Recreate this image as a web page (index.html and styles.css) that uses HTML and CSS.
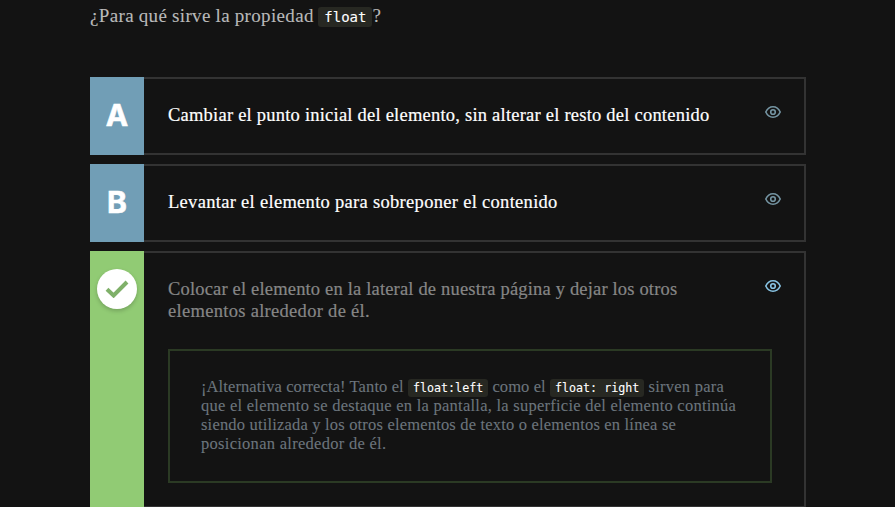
FILE: index.html
```html
<!DOCTYPE html>
<html lang="es">
<head>
<meta charset="utf-8">
<title>Propiedad float</title>
<link rel="stylesheet" href="styles.css">
</head>
<body>
<svg class="symbols" aria-hidden="true">
  <symbol id="eye" viewBox="0 0 18 14">
    <path d="M1.800 7C3.200 3.900 5.700 1.800 9 1.800S14.800 3.900 16.200 7C14.800 10.100 12.300 12.200 9 12.200S3.200 10.100 1.800 7Z" fill="none" stroke="currentColor" stroke-width="1.6"/>
    <circle cx="9" cy="7" r="2.3" fill="none" stroke="currentColor" stroke-width="1.6"/>
  </symbol>
</svg>
<main class="quiz">
  <p class="question"><span class="q1">¿Para qué sirve la propiedad</span> <code>float</code>?</p>
  <ol class="options">
    <li class="option">
      <div class="letter">A</div>
      <div class="body"><p class="answer"><span class="a1">Cambiar el punto inicial del elemento, sin alterar el resto del contenido</span></p></div>
      <svg class="eye"><use href="#eye"/></svg>
    </li>
    <li class="option">
      <div class="letter">B</div>
      <div class="body"><p class="answer"><span class="a2">Levantar el elemento para sobreponer el contenido</span></p></div>
      <svg class="eye"><use href="#eye"/></svg>
    </li>
    <li class="option correct">
      <div class="letter"><span class="check"><svg viewBox="0 0 24 18"><path d="M2 9.200 8.600 15.500 22 2" fill="none" stroke="#7fb069" stroke-width="4"/></svg></span></div>
      <div class="body">
        <p class="answer"><span class="a3">Colocar el elemento en la lateral de nuestra página y dejar los otros</span><br><span class="a4">elementos alrededor de él.</span></p>
        <div class="opinion">
          <p><span class="o1">¡Alternativa correcta! Tanto el</span> <code>float:left</code> <span class="o2">como el</span> <code>float: right</code> <span class="o3">sirven para</span><br>
          <span class="o4">que el elemento se destaque en la pantalla, la superficie del elemento continúa</span><br>
          <span class="o5">siendo utilizada y los otros elementos de texto o elementos en línea se</span><br>
          <span class="o6">posicionan alrededor de él.</span></p>
        </div>
      </div>
      <svg class="eye"><use href="#eye"/></svg>
    </li>
  </ol>
</main>
</body>
</html>
```
FILE: styles.css
```css
* { box-sizing: border-box; }
html { overflow: hidden; background: #131313; }
body { margin: 0; background: #131313; color: #b9b9b9; font: 18.5px/22px "Liberation Serif", serif; }
p, ol { margin: 0; padding: 0; }
.symbols { display: none; }
.quiz { width: 716px; margin-left: 90px; padding-top: 5px; }
.question { height: 72px; white-space: nowrap; font-size: 19px; word-spacing: -0.3px; -webkit-text-stroke: 0.1px; }
code { background: #272822; color: #fff; border-radius: 3px; font: 14px/1 "DejaVu Sans Mono", monospace; padding: 2px 6px; word-spacing: 0; }
.options { display: grid; gap: 9px; list-style: none; }
.option { display: flex; min-height: 78px; border: 2px solid #333; border-left: 0; color: #fff; }
.letter { width: 54px; margin: -2px 0; padding-bottom: 3px; flex: none; display: flex; justify-content: center; align-items: center; background: #719eb6; font: bold 30px/40px Inter, sans-serif; -webkit-text-stroke: 0.6px; }
.body { flex: 1; padding: 25px 0 24px 24px; white-space: nowrap; -webkit-text-stroke: 0.2px; }
.eye { flex: none; width: 18px; height: 14px; margin: 26px 22px 0 -8px; color: #7595a3; }
.correct { height: 257px; color: #868686; }
.correct .letter { background: #91cb74; align-items: flex-start; padding-top: 18px; }
.correct .eye { color: #88c4e4; }
.check { width: 40px; height: 40px; border-radius: 50%; background: #fff; box-shadow: 0 2px 4px rgba(0,0,0,.2); display: grid; place-items: center; }
.check svg { width: 24px; height: 18px; }
.opinion { width: 604px; height: 134px; margin-top: 27px; padding: 26px 31px; border: 2px solid #2b3a24; font-size: 16.5px; line-height: 19px; color: #6c757d; -webkit-text-stroke: 0.1px; }
.opinion code { font-size: 11.7px; padding: 2px 5px; }
.q1 { letter-spacing: .35px; }
.a1 { letter-spacing: .225px; }
.a2 { letter-spacing: .3px; }
.a3 { letter-spacing: .175px; }
.a4 { letter-spacing: .3px; }
.o1 { letter-spacing: .1px; }
.o2 { letter-spacing: .1px; }
.o3 { letter-spacing: .25px; }
.o4 { letter-spacing: .25px; }
.o5 { letter-spacing: .185px; }
.o6 { letter-spacing: .28px; }
```
